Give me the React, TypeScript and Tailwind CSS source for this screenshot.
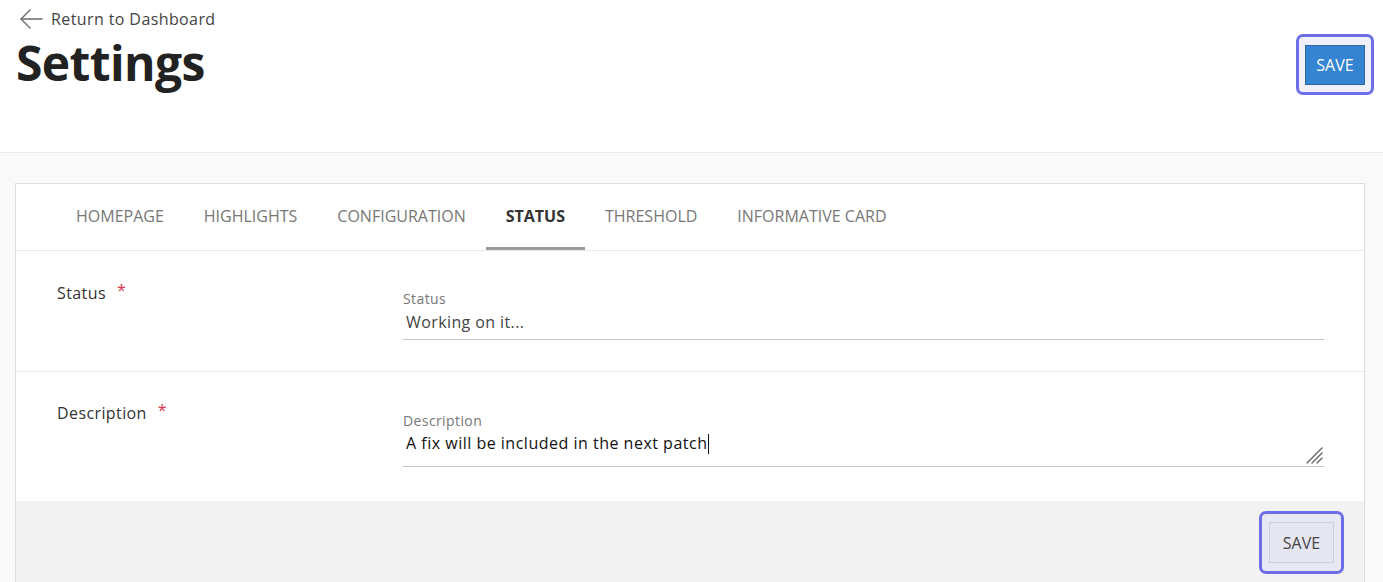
import React from "react";

const font = { fontFamily: '"Open Sans", "Noto Sans", sans-serif' };

function BackArrow() {
  return (
    <svg width="24" height="20" viewBox="0 0 24 20" fill="none" stroke="#6b6b6b" strokeWidth="1.4" strokeLinecap="round" strokeLinejoin="round">
      <path d="M2 10 H23" />
      <path d="M11 1 L2 10 L11 19" />
    </svg>
  );
}

function ResizeHandle() {
  return (
    <svg width="19" height="19" viewBox="0 0 19 19" stroke="#6a6a6a" strokeWidth="1.4" strokeLinecap="round">
      <path d="M2 17 L17 2" />
      <path d="M7 17 L17 7" />
      <path d="M12 17 L17 12" />
    </svg>
  );
}

const tabs = ["HOMEPAGE", "HIGHLIGHTS", "CONFIGURATION", "STATUS", "THRESHOLD", "INFORMATIVE CARD"];

export default function App() {
  return (
    <div className="min-h-[582px] bg-[#f9f9f9] overflow-hidden" style={font}>
      <header className="h-[153px] bg-white border-b border-[#ebebeb] flex justify-between">
        <div className="pl-[16px] pt-[8px]">
          <div className="flex items-center gap-[8px] pl-[3px] h-[22px]">
            <BackArrow />
            <span className="text-[16px] text-[#444] leading-[22px] tracking-[0.4px]">Return to Dashboard</span>
          </div>
          <h1 className="text-[48px] font-bold text-[#222] leading-[60px] mt-[3px] tracking-[-0.6px]">Settings</h1>
        </div>
        <div className="pt-[34px] pr-[9px]">
          <div className="border-[3px] border-[#6d6de8] rounded-[7px] bg-[#f0f0fb] px-[6px] pt-[8px] pb-[7px]">
            <button className="w-[60px] h-[40px] bg-[#3584d2] border border-[#2b6aa8] text-white text-[16px] leading-none">
              SAVE
            </button>
          </div>
        </div>
      </header>

      <main className="pt-[30px] pl-[15px] pr-[18px]">
        <div className="bg-white border border-[#dedede] border-b-0">
          <nav className="h-[67px] border-b border-[#e8e8e8] flex pl-[40px]">
            {tabs.map((t) => {
              const active = t === "STATUS";
              return (
                <div
                  key={t}
                  className={
                    "px-[20px] h-full flex items-center text-[16px] relative " +
                    (active ? "font-bold text-[#333]" : "text-[#777]")
                  }
                >
                  <span className="pb-[2px]">{t}</span>
                  {active && <div className="absolute left-0 right-0 bottom-[0px] h-[3px] bg-[#9a9a9a]" />}
                </div>
              );
            })}
          </nav>

          <section className="flex border-b border-[#ececec] h-[121px] pl-[41px] pr-[40px] tracking-[0.4px]">
            <div className="w-[346px] pt-[31px] text-[16px] text-[#333] leading-[22px]">
              Status<span className="text-[#d8344c] ml-[11px] relative top-[-3px]">*</span>
            </div>
            <div className="flex-1 pt-[39px]">
              <div className="text-[14px] text-[#777] leading-[18px]">Status</div>
              <div className="border-b border-[#c6c6c6] pl-[3px] pt-[3px] pb-[6px] text-[16px] text-[#444] leading-[22px]">
                Working on it...
              </div>
            </div>
          </section>

          <section className="flex h-[129px] pl-[41px] pr-[40px] tracking-[0.4px]">
            <div className="w-[346px] pt-[30px] text-[16px] text-[#333] leading-[22px]">
              Description<span className="text-[#d8344c] ml-[11px] relative top-[-3px]">*</span>
            </div>
            <div className="flex-1 pt-[40px]">
              <div className="text-[14px] text-[#777] leading-[18px]">Description</div>
              <div className="relative border-b border-[#c6c6c6] pl-[3px] pt-[2px] pb-[14px] text-[16px] text-[#111] leading-[22px] h-[37px] tracking-[0.5px]">
                A fix will be included in the next patch
                <span className="inline-block w-[1px] h-[20px] bg-[#111] align-middle ml-[1px] relative top-[-1px]" />
                <div className="absolute right-0 bottom-[1px]">
                  <ResizeHandle />
                </div>
              </div>
            </div>
          </section>

          <footer className="bg-[#f2f2f2] h-[90px] flex justify-end pt-[10px] pr-[20px]">
            <div className="h-[63px] border-[3px] border-[#6d6de8] rounded-[7px] bg-[#e8e8f5] px-[7px] pt-[8px]">
              <button className="w-[65px] h-[41px] bg-[#e6e6f2] border border-[#cfcfd8] text-[#444] text-[16px] leading-none">
                SAVE
              </button>
            </div>
          </footer>
        </div>
      </main>
    </div>
  );
}
